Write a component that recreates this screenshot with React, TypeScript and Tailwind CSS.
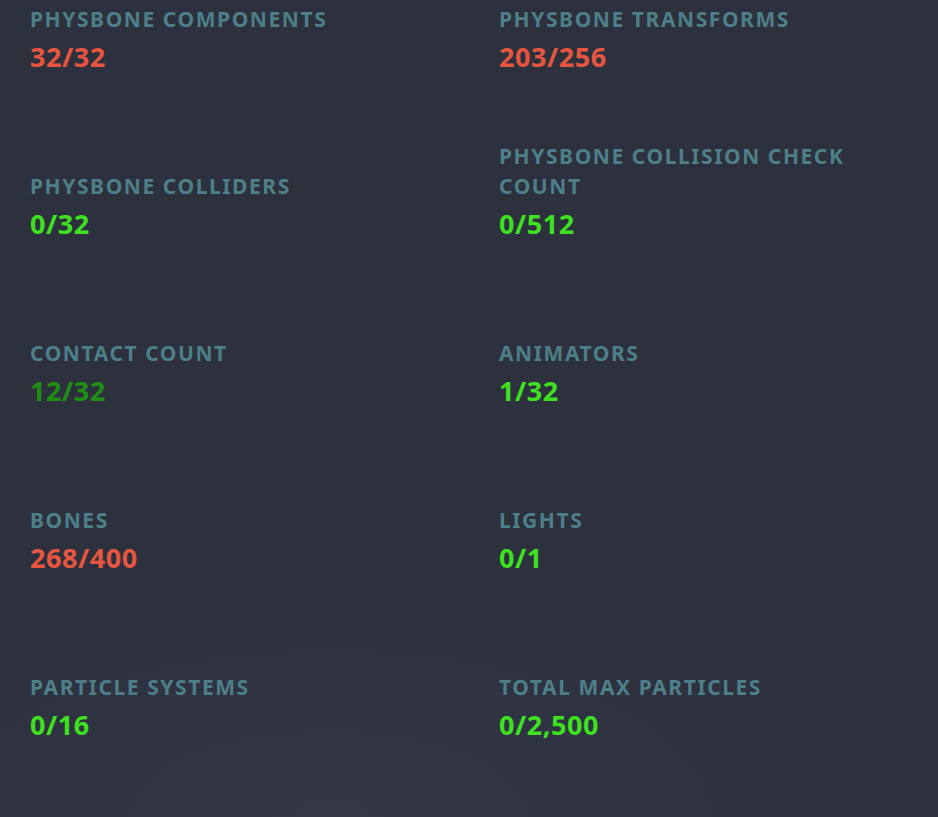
import React from 'react';

type Stat = { label: string; value: string; tone: 'bad' | 'good' | 'ok' };

const stats: Stat[] = [
  { label: 'PhysBone Components', value: '32/32', tone: 'bad' },
  { label: 'PhysBone Transforms', value: '203/256', tone: 'bad' },
  { label: 'PhysBone Colliders', value: '0/32', tone: 'good' },
  { label: 'PhysBone Collision Check Count', value: '0/512', tone: 'good' },
  { label: 'Contact Count', value: '12/32', tone: 'ok' },
  { label: 'Animators', value: '1/32', tone: 'good' },
  { label: 'Bones', value: '268/400', tone: 'bad' },
  { label: 'Lights', value: '0/1', tone: 'good' },
  { label: 'Particle Systems', value: '0/16', tone: 'good' },
  { label: 'Total Max Particles', value: '0/2,500', tone: 'good' },
];

const toneClass = {
  bad: 'text-[#e6553f]',
  good: 'text-[#3ee01f]',
  ok: 'text-[#1f8f12]',
};

export default function App() {
  return (
    <div className="min-h-screen w-full bg-[#2d313e] bg-[radial-gradient(ellipse_60%_30%_at_35%_100%,#333746,transparent)] font-['Noto_Sans',sans-serif] overflow-hidden">
      <div className="grid grid-cols-[469px_1fr] gap-y-[92px] pt-[4px] pl-[30px]">
        {stats.map((s) => (
          <div key={s.label} className="h-[75px] flex flex-col justify-end pr-6">
            <div className="text-[21px] leading-[30px] font-bold uppercase tracking-[0.075em] text-[#4d7f89]">
              {s.label}
            </div>
            <div className={`mt-[1px] text-[27px] leading-[44px] font-bold tracking-[0.02em] ${toneClass[s.tone]}`}>
              {s.value}
            </div>
          </div>
        ))}
      </div>
    </div>
  );
}
